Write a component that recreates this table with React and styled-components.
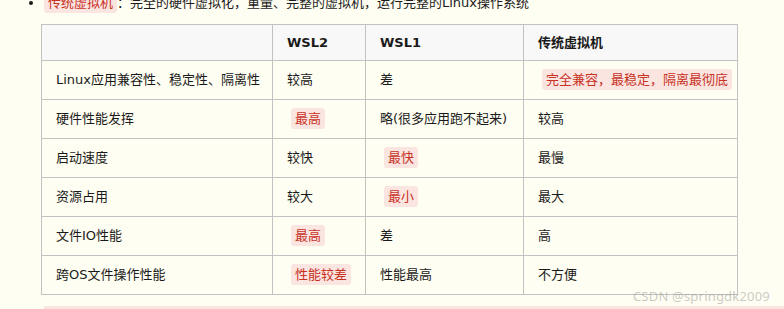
import React from "react";
import styled, { createGlobalStyle } from "styled-components";

const Global = createGlobalStyle`
  html, body { margin: 0; padding: 0; background: #fffef2; }
  body {
    font-family: "DejaVu Sans", "Noto Sans CJK SC", sans-serif;
    font-size: 13px;
    color: #1a1a1a;
    overflow: hidden;
  }
`;

const Page = styled.div`
  position: relative;
  width: 784px;
  height: 309px;
  overflow: hidden;
`;

const Scroller = styled.div`
  margin-top: -8px;
`;

const List = styled.ul`
  margin: 0;
  padding-left: 44px;
  list-style: disc;
`;

const Item = styled.li`
  line-height: 22px;
`;

const Code = styled.code`
  font-family: "DejaVu Sans", "Noto Sans CJK SC", sans-serif;
  font-size: 13px;
  color: #c8321f;
  background: #fbe5e1;
  border-radius: 3px;
  padding: 3px 4px;
  margin-left: ${(p) => (p.$inset ? "4px" : "0")};
`;

const Table = styled.table`
  border-collapse: collapse;
  table-layout: fixed;
  width: 696px;
  margin: 10px 0 11px 41px;
`;

const Th = styled.th`
  background: #f8f8f8;
  border: 1px solid #c2c2c2;
  text-align: left;
  font-weight: bold;
  padding: 6px 14px;
  line-height: 23px;
  height: 23px;
  white-space: nowrap;
`;

const Td = styled.td`
  border: 1px solid #c2c2c2;
  padding: 8px 14px;
  line-height: 22px;
  height: 22px;
  white-space: nowrap;
`;

const Block = styled.div`
  background: #fbe5e1;
  height: 40px;
  margin-right: -40px;
`;

const Watermark = styled.div`
  position: absolute;
  right: 14px;
  bottom: 4px;
  font-family: "Noto Sans", sans-serif;
  font-size: 13px;
  color: rgba(150, 150, 150, 0.5);
  letter-spacing: 0.2px;
`;

const rows = [
  ["Linux应用兼容性、稳定性、隔离性", "较高", "差", { c: "完全兼容，最稳定，隔离最彻底" }],
  ["硬件性能发挥", { c: "最高" }, "略(很多应用跑不起来)", "较高"],
  ["启动速度", "较快", { c: "最快" }, "最慢"],
  ["资源占用", "较大", { c: "最小" }, "最大"],
  ["文件IO性能", { c: "最高" }, "差", "高"],
  ["跨OS文件操作性能", { c: "性能较差" }, "性能最高", "不方便"],
];

const Cell = ({ v }) => (
  <Td>{typeof v === "string" ? v : <Code $inset>{v.c}</Code>}</Td>
);

export default function App() {
  return (
    <>
      <Global />
      <Page>
        <Scroller>
          <List>
            <Item>
              <Code>传统虚拟机</Code>：完全的硬件虚拟化，重量、完整的虚拟机，运行完整的Linux操作系统
            </Item>
          </List>
          <Table>
            <colgroup>
              <col style={{ width: 231 }} />
              <col style={{ width: 93 }} />
              <col style={{ width: 158 }} />
              <col style={{ width: 214 }} />
            </colgroup>
            <thead>
              <tr>
                <Th></Th>
                <Th>WSL2</Th>
                <Th>WSL1</Th>
                <Th>传统虚拟机</Th>
              </tr>
            </thead>
            <tbody>
              {rows.map((r, i) => (
                <tr key={i}>
                  {r.map((v, j) => (
                    <Cell key={j} v={v} />
                  ))}
                </tr>
              ))}
            </tbody>
          </Table>
          <List>
            <Item>
              <Block />
            </Item>
          </List>
        </Scroller>
        <Watermark>CSDN @springdk2009</Watermark>
      </Page>
    </>
  );
}
